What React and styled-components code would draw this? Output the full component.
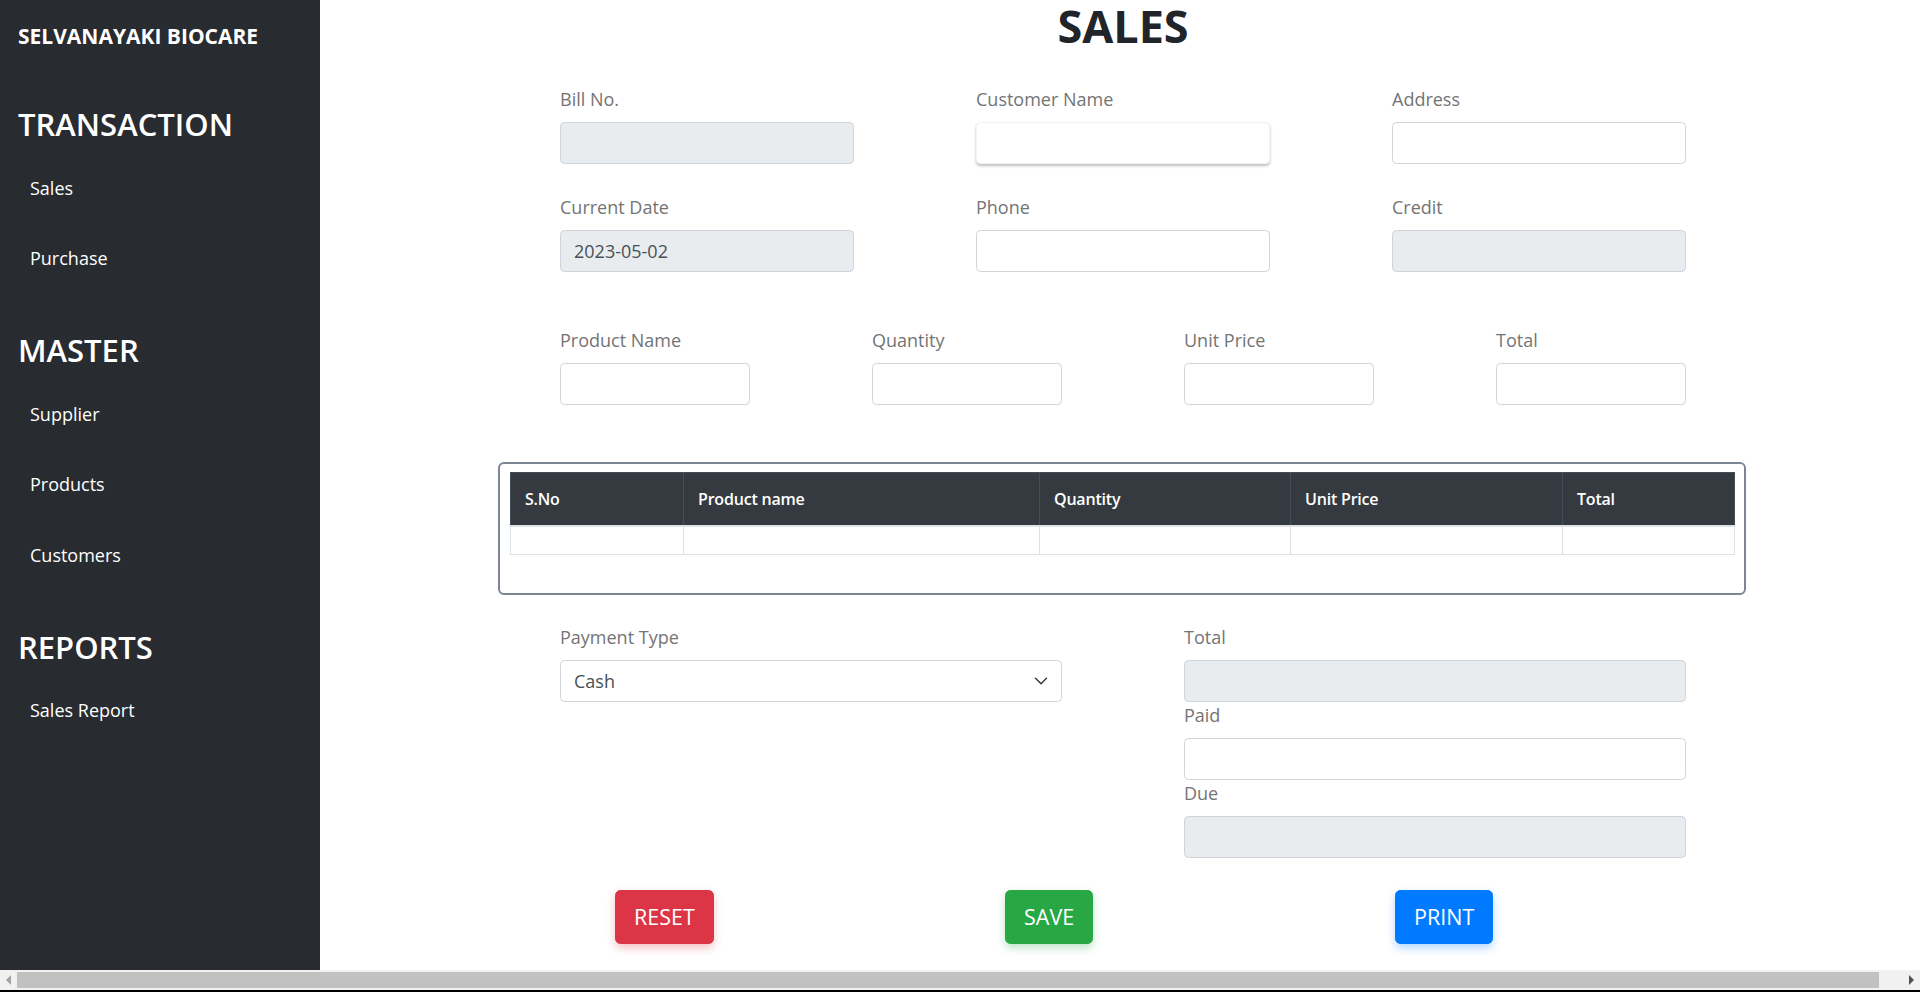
import styled, { createGlobalStyle } from "styled-components";
import { ChevronDown } from "lucide-react";

const GlobalStyle = createGlobalStyle`
  html, body, #root {
    height: 100%;
  }
  body {
    margin: 0;
    font-family: "Open Sans", "Liberation Sans", sans-serif;
    font-size: 18px;
    color: #212529;
    background: #fff;
    overflow: hidden;
  }
  * {
    box-sizing: border-box;
  }
`;

const Layout = styled.div`
  display: flex;
  width: 1936px;
  min-height: 100%;
`;

const Sidebar = styled.nav`
  flex: 0 0 320px;
  display: flex;
  flex-direction: column;
  background: #282b30;
  color: #fff;
  padding: 20px 0 0 18px;
`;

const Brand = styled.div`
  font-size: 21px;
  font-weight: 700;
  line-height: 33px;
  margin-bottom: 15px;
`;

const SectionTitle = styled.h2`
  margin: 35px 0 7px;
  font-size: 31px;
  font-weight: 600;
  line-height: 43px;
`;

const NavItem = styled.a`
  display: block;
  padding: 21.5px 0 22px 12px;
  line-height: 27px;
  color: #fff;
  text-decoration: none;
  cursor: pointer;
`;

const Main = styled.main`
  flex: 1;
  padding-right: 10px;
`;

const Content = styled.div`
  width: 1126px;
  margin: 0 auto;
`;

const Title = styled.h1`
  margin: 0;
  text-align: center;
  font-size: 45px;
  font-weight: 700;
  line-height: 52px;
  color: #212529;
`;

const FieldGrid = styled.div`
  display: grid;
  grid-template-columns: repeat(${(p) => p.$cols}, 1fr);
  column-gap: 122px;
  row-gap: ${(p) => p.$rowGap || 0}px;
  margin-top: ${(p) => p.$top}px;
  align-items: start;
`;

const Stack = styled.div`
  display: flex;
  flex-direction: column;
`;

const Label = styled.label`
  display: block;
  margin-bottom: 9px;
  line-height: 27px;
  color: #747474;
`;

const Input = styled.input`
  display: block;
  width: 100%;
  height: 42px;
  padding: 0 13px;
  font-family: inherit;
  font-size: 18px;
  color: #495057;
  background: #fff;
  border: 1px solid ${(p) => (p.$raised ? "#f3f3f3" : "#ced4da")};
  border-radius: 4.5px;
  box-shadow: ${(p) => (p.$raised ? "0 2px 3px rgba(0, 0, 0, 0.25)" : "none")};
  outline: none;

  &:disabled {
    background: #e9ecef;
    color: #495057;
    opacity: 1;
  }
`;

const SelectBox = styled.div`
  display: flex;
  align-items: center;
  justify-content: space-between;
  height: 42px;
  padding: 0 9px 0 13px;
  color: #495057;
  border: 1px solid #ced4da;
  border-radius: 4.5px;
  background: #fff;
`;

const TableFrame = styled.div`
  margin: 57px -60px 0 -62px;
  border: 2px solid #7d8593;
  border-radius: 6px;
  padding: 8px 10px 38px;
`;

const Table = styled.table`
  width: 100%;
  border-collapse: collapse;
  table-layout: fixed;
  font-size: 16px;
`;

const HeadCell = styled.th`
  background: #343a40;
  color: #fff;
  font-weight: 600;
  letter-spacing: -0.2px;
  text-align: left;
  padding: 14px;
  line-height: 24px;
  border: 1px solid #454d55;
  border-bottom: 2px solid #dee2e6;
`;

const BodyCell = styled.td`
  height: 28px;
  padding: 0;
  border: 1px solid #dee2e6;
`;

const ButtonRow = styled.div`
  display: grid;
  grid-template-columns: repeat(3, 390px);
  justify-items: start;
  padding-left: 55px;
  margin-top: 32px;
`;

const ActionButton = styled.button`
  font-family: inherit;
  font-size: 21.5px;
  line-height: 34px;
  padding: 9px 18px;
  color: #fff;
  background: ${(p) => p.$color};
  border: 1px solid ${(p) => p.$color};
  border-radius: 5.4px;
  box-shadow: 0 4px 8px ${(p) => p.$shadow};
  cursor: pointer;
`;

/* page scrollbar painted at the bottom edge, over the content */
const ScrollBar = styled.div`
  position: fixed;
  left: 0;
  right: 0;
  bottom: 0;
  height: 22px;
  display: flex;
  align-items: center;
  gap: 6px;
  padding: 0 6px;
  background: #f1f1f1;
  border-bottom: 2px solid #000;
`;

const ScrollThumb = styled.div`
  flex: 1;
  height: 16px;
  margin-right: 24px;
  background: #c1c1c1;
`;

const ScrollArrow = styled.span`
  width: 0;
  height: 0;
  border-top: 5px solid transparent;
  border-bottom: 5px solid transparent;
  ${(p) => (p.$dir === "left" ? "border-right: 5px solid #a3a3a3;" : "border-left: 5px solid #505050;")}
`;

const columns = [
  { title: "S.No", width: 173 },
  { title: "Product name", width: 356 },
  { title: "Quantity", width: 251 },
  { title: "Unit Price", width: 272 },
  { title: "Total", width: 172 },
];

function Field({ label, value, disabled, raised }) {
  return (
    <div>
      <Label>{label}</Label>
      <Input readOnly value={value || ""} disabled={disabled} $raised={raised} />
    </div>
  );
}

function App() {
  return (
    <>
      <GlobalStyle />
      <Layout>
        <Sidebar>
          <Brand>SELVANAYAKI BIOCARE</Brand>
          <SectionTitle>TRANSACTION</SectionTitle>
          <NavItem>Sales</NavItem>
          <NavItem>Purchase</NavItem>
          <SectionTitle>MASTER</SectionTitle>
          <NavItem>Supplier</NavItem>
          <NavItem>Products</NavItem>
          <NavItem>Customers</NavItem>
          <SectionTitle>REPORTS</SectionTitle>
          <NavItem>Sales Report</NavItem>
        </Sidebar>

        <Main>
          <Content>
            <Title>SALES</Title>

            <FieldGrid $cols={3} $rowGap={30} $top={34}>
              <Field label="Bill No." disabled />
              <Field label="Customer Name" raised />
              <Field label="Address" />
              <Field label="Current Date" value="2023-05-02" disabled />
              <Field label="Phone" />
              <Field label="Credit" disabled />
            </FieldGrid>

            <FieldGrid $cols={4} $top={55}>
              <Field label="Product Name" />
              <Field label="Quantity" />
              <Field label="Unit Price" />
              <Field label="Total" />
            </FieldGrid>

            <TableFrame>
              <Table>
                <colgroup>
                  {columns.map((c) => (
                    <col key={c.title} style={{ width: c.width }} />
                  ))}
                </colgroup>
                <thead>
                  <tr>
                    {columns.map((c) => (
                      <HeadCell key={c.title}>{c.title}</HeadCell>
                    ))}
                  </tr>
                </thead>
                <tbody>
                  <tr>
                    {columns.map((c) => (
                      <BodyCell key={c.title} />
                    ))}
                  </tr>
                </tbody>
              </Table>
            </TableFrame>

            <FieldGrid $cols={2} $top={29}>
              <div>
                <Label>Payment Type</Label>
                <SelectBox>
                  <span>Cash</span>
                  <ChevronDown size={22} strokeWidth={1.6} color="#343a40" />
                </SelectBox>
              </div>
              <Stack>
                <Field label="Total" disabled />
                <Field label="Paid" />
                <Field label="Due" disabled />
              </Stack>
            </FieldGrid>

            <ButtonRow>
              <ActionButton $color="#dc3545" $shadow="rgba(220, 53, 69, 0.3)">RESET</ActionButton>
              <ActionButton $color="#28a745" $shadow="rgba(40, 167, 69, 0.3)">SAVE</ActionButton>
              <ActionButton $color="#007bff" $shadow="rgba(0, 123, 255, 0.3)">PRINT</ActionButton>
            </ButtonRow>
          </Content>
        </Main>
      </Layout>
      <ScrollBar>
        <ScrollArrow $dir="left" />
        <ScrollThumb />
        <ScrollArrow $dir="right" />
      </ScrollBar>
    </>
  );
}

export default App;
